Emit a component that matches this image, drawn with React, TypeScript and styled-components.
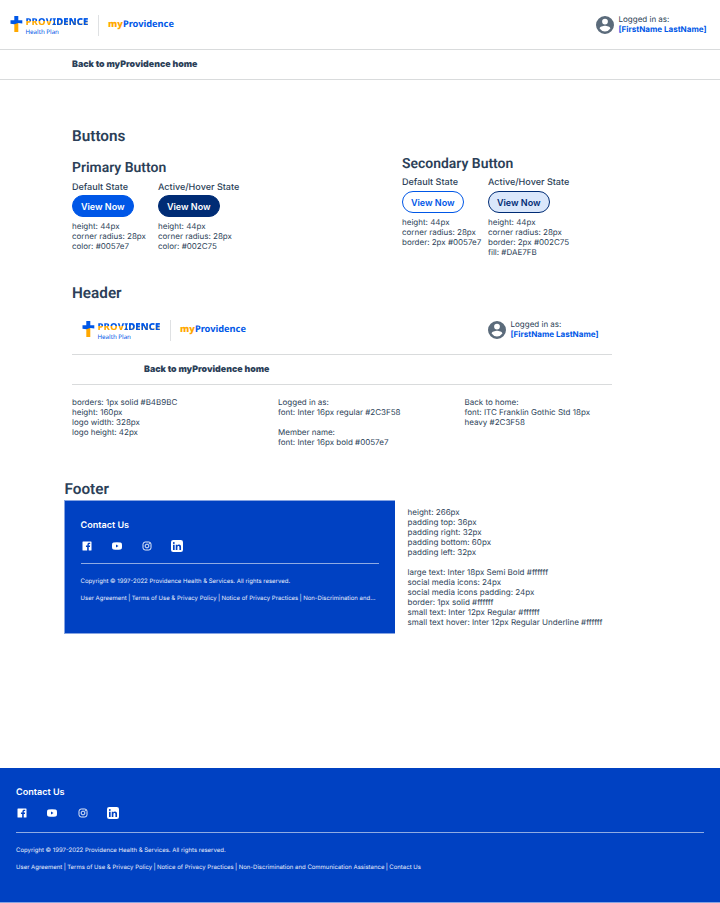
import React from "react";
import styled, { createGlobalStyle } from "styled-components";

const Global = createGlobalStyle`
  * { box-sizing: border-box; }
  body { margin: 0; background: #fff; text-rendering: geometricPrecision; }
`;

const Page = styled.div`
  width: 720px;
  height: 903px;
  overflow: hidden;
  display: flex;
  flex-direction: column;
  background: #fff;
  color: #2c3f58;
  font: 400 8px/10px Inter, sans-serif;
  white-space: nowrap;
`;

/* Header */
const HeaderBox = styled.header<{ $w: number }>`
  width: ${(p) => p.$w}px;
  height: 80px;
  flex: none;
`;
const Bar = styled.div`
  height: 50px;
  border-bottom: 1px solid #d9dbdc;
  display: flex;
  align-items: flex-start;
  justify-content: space-between;
`;
const Brand = styled.div`
  display: flex;
  padding: 15px 0 0 10px;
`;
const Cross = styled.svg`
  width: 13px;
  height: 17px;
  margin-top: 1px;
`;
const Names = styled.div`
  width: 66px;
  margin-left: 2.5px;
  padding-top: 1px;
`;
const Providence = styled.div`
  width: 64px;
  font: 800 9.5px/12px "Noto Sans", sans-serif;
  letter-spacing: 0.15px;
  color: transparent;
  background: linear-gradient(122deg, transparent 44%, #0057e7 44.5%),
    linear-gradient(#0057e7 0 42%, #ffa800 42%);
  background-clip: text;
  -webkit-background-clip: text;
`;
const Plan = styled.div`
  font: 400 6.2px/7px "Noto Sans", sans-serif;
  color: #0057e7;
`;
const Rule = styled.div`
  width: 1px;
  height: 21px;
  background: #dfe1e3;
  margin-left: 6.5px;
`;
const Product = styled.div`
  margin: 3px 0 0 9px;
  font: 700 9.25px/12px "Noto Sans", sans-serif;
  color: #0057e7;
  b { color: #ffa800; }
`;
const User = styled.div`
  width: 124px;
  display: flex;
  padding-top: 15px;
  svg { width: 18px; height: 18px; margin-top: 1px; flex: none; }
`;
const UserText = styled.div`
  margin-left: 4.5px;
  line-height: 9.5px;
  b { display: block; font-weight: 700; font-size: 8.04px; color: #0057e7; }
`;
const Back = styled.div`
  height: 30px;
  border-bottom: 1px solid #d9dbdc;
  padding-left: 72px;
  font: 900 8.85px/30px Inter, sans-serif;
`;

function Header({ width }: { width: number }) {
  return (
    <HeaderBox $w={width}>
      <Bar>
        <Brand>
          <Cross viewBox="0 0 13 17">
            <path d="M4.3 7h4v9h-4z" fill="#ffa800" />
            <path d="M4.3 0h4v4.2h4v3.2l-4-.4-4 1.2-3.8-.5V4.2h3.8z" fill="#0057e7" />
          </Cross>
          <Names>
            <Providence>PROVIDENCE</Providence>
            <Plan>Health Plan</Plan>
          </Names>
          <Rule />
          <Product><b>my</b>Providence</Product>
        </Brand>
        <User>
          <svg viewBox="2 2 20 20" fill="#5b6b7b">
            <path d="M12 2a10 10 0 1 0 0 20 10 10 0 0 0 0-20zm0 3a3.2 3.2 0 1 1 0 6.4A3.2 3.2 0 0 1 12 5zm0 14.2a7.2 7.2 0 0 1-6-3.2c0-2 4-3.1 6-3.1s6 1.100 6 3.100a7.200 7.200 0 0 1-6 3.200z" />
          </svg>
          <UserText>Logged in as:<b>[FirstName LastName]</b></UserText>
        </User>
      </Bar>
      <Back>Back to myProvidence home</Back>
    </HeaderBox>
  );
}

/* Sections */
const Heading = styled.h1`
  margin: 0;
  font: 600 15.3px/20px Roboto, sans-serif;
`;
const SubHeading = styled.h2`
  margin: 0 0 3.5px;
  font: 600 13.95px/20px Roboto, sans-serif;
`;
const ButtonsSection = styled.section`
  margin: 46px 0 0 72px;
  height: 157px;
  display: flex;
`;
const Group = styled.div<{ $w: number; $top: number }>`
  width: ${(p) => p.$w}px;
  padding-top: ${(p) => p.$top}px;
  ${Heading} { margin-bottom: 12px; }
`;
const States = styled.div`
  display: flex;
`;
const State = styled.div`
  width: 86px;
`;
const StateName = styled.div`
  font: 500 9.05px/12px Inter, sans-serif;
`;
const Pill = styled.button<{ $bg: string; $fg: string; $line: string }>`
  display: block;
  width: 61.5px;
  height: 22px;
  margin: 1.5px 0 4px;
  padding: 0;
  border: 1px solid ${(p) => p.$line};
  border-radius: 14px;
  background: ${(p) => p.$bg};
  color: ${(p) => p.$fg};
  font: 600 9px/21px Inter, sans-serif;
`;
const Note = styled.div<{ $w?: number }>`
  width: ${(p) => (p.$w ? p.$w + "px" : "auto")};
  white-space: pre;
`;
const HeaderSection = styled.section`
  margin-left: 72px;
  height: 195px;
  ${Heading} { margin-bottom: 2px; }
`;
const Notes = styled.div`
  display: flex;
  padding-top: 12px;
`;
const FooterSection = styled.section`
  margin-left: 64px;
  height: 290px;
  ${Heading} { line-height: 22px; padding-left: 0.5px; }
`;
const FooterRow = styled.div`
  display: flex;
  gap: 12.5px;
  ${Note} { padding-top: 7px; font-size: 8.04px; }
`;

/* Footer */
const FooterBox = styled.footer<{ $w: number; $h: number; $boxed?: boolean }>`
  width: ${(p) => p.$w}px;
  height: ${(p) => p.$h}px;
  flex: none;
  padding: ${(p) => (p.$boxed ? "18.5px 16px 0 15.5px" : "18.5px 16px 0")};
  background: #0041c2;
  border: 0 solid #86a4e2;
  border-width: ${(p) => (p.$boxed ? "1px 0 1px 1px" : "0 0 1px")};
  color: #fff;
`;
const Contact = styled.div`
  font: 600 9.05px/12px Inter, sans-serif;
`;
const Social = styled.div`
  display: flex;
  gap: 18.3px;
  margin-top: 8.5px;
  svg { width: 12px; height: 12px; display: block; }
`;
const Divider = styled.div<{ $top: number; $bottom: number }>`
  height: 1px;
  background: #8fabe3;
  margin: ${(p) => p.$top}px 0 ${(p) => p.$bottom}px;
`;
const Small = styled.div`
  font: 400 6px/8px Inter, sans-serif;
  margin-bottom: 9px;
  color: #e8eefa;
`;
const Links = styled(Small)`
  display: flex;
  span + span::before {
    content: "|";
    margin: 0 1.35px;
    font-size: 6.5px;
    line-height: 1px;
  }
`;

interface FooterProps {
  width: number;
  height: number;
  top: number;
  bottom: number;
  boxed?: boolean;
  links: string[];
}

function Footer(p: FooterProps) {
  return (
    <FooterBox $w={p.width} $h={p.height} $boxed={p.boxed}>
      <Contact>Contact Us</Contact>
      <Social>
        <svg viewBox="0 0 24 24">
          <path fill="#fff" d="M4 3h16a1 1 0 0 1 1 1v16a1 1 0 0 1-1 1h-4.500v-7h2.400l.4-2.800h-2.800V9.500c0-.9.400-1.400 1.400-1.400h1.500V5.600c-.4 0-1.200-.1-2-.1-2.200 0-3.600 1.300-3.600 3.700v2H9.900V14h2.400v7H4a1 1 0 0 1-1-1V4a1 1 0 0 1 1-1z" />
        </svg>
        <svg viewBox="0 0 24 24">
          <path fill="#fff" fillRule="evenodd" d="M5 5q7-.8 14 0 2.600.2 2.800 2.800.5 4.200 0 8.400-.2 2.600-2.800 2.800-7 .8-14 0-2.600-.2-2.800-2.800-.5-4.200 0-8.400Q2.400 5.200 5 5zm5 4v6l5-3z" />
        </svg>
        <svg viewBox="0 0 24 24" fill="none" stroke="#fff" strokeWidth="1.8">
          <rect x="4" y="4" width="16" height="16" rx="4.500" />
          <circle cx="12" cy="12" r="3.800" />
          <circle cx="16.600" cy="7.400" r=".5" />
        </svg>
        <svg viewBox="0 0 24 24">
          <rect width="24" height="24" rx="4.500" fill="#fff" />
          <path fill="#0041c2" d="M4 9.300h3.300V20H4zM5.650 4a1.900 1.900 0 1 1 0 3.800 1.900 1.900 0 0 1 0-3.800zM9.500 9.300h3.200v1.500c.6-1 1.700-1.800 3.300-1.800 3.200 0 4.100 2 4.100 5V20h-3.300v-5.300c0-1.500-.3-2.800-1.900-2.800s-2.100 1.200-2.100 2.700V20H9.500z" />
        </svg>
      </Social>
      <Divider $top={p.top} $bottom={p.bottom} />
      <Small>Copyright © 1997-2022 Providence Health &amp; Services. All rights reserved.</Small>
      <Links>{p.links.map((l) => <span key={l}>{l}</span>)}</Links>
    </FooterBox>
  );
}

const common = ["User Agreement", "Terms of Use & Privacy Policy", "Notice of Privacy Practices"];

export default function App() {
  return (
    <Page>
      <Global />
      <Header width={720} />
      <ButtonsSection>
        <Group $w={330} $top={0}>
          <Heading>Buttons</Heading>
          <SubHeading>Primary Button</SubHeading>
          <States>
            <State>
              <StateName>Default State</StateName>
              <Pill $bg="#0057e7" $fg="#fff" $line="#0057e7">View Now</Pill>
              <Note>{"height: 44px\ncorner radius: 28px\ncolor: #0057e7"}</Note>
            </State>
            <State>
              <StateName>Active/Hover State</StateName>
              <Pill $bg="#002c75" $fg="#fff" $line="#002c75">View Now</Pill>
              <Note>{"height: 44px\ncorner radius: 28px\ncolor: #002C75"}</Note>
            </State>
          </States>
        </Group>
        <Group $w={250} $top={27.5}>
          <SubHeading>Secondary Button</SubHeading>
          <States>
            <State>
              <StateName>Default State</StateName>
              <Pill $bg="#fff" $fg="#0057e7" $line="#0057e7">View Now</Pill>
              <Note>{"height: 44px\ncorner radius: 28px\nborder: 2px #0057e7"}</Note>
            </State>
            <State>
              <StateName>Active/Hover State</StateName>
              <Pill $bg="#dae7fb" $fg="#002c75" $line="#002c75">View Now</Pill>
              <Note>{"height: 44px\ncorner radius: 28px\nborder: 2px #002C75\nfill: #DAE7FB"}</Note>
            </State>
          </States>
        </Group>
      </ButtonsSection>
      <HeaderSection>
        <Heading>Header</Heading>
        <Header width={540} />
        <Notes>
          <Note $w={206}>{"borders: 1px solid #B4B9BC\nheight: 160px\nlogo width: 328px\nlogo height: 42px"}</Note>
          <Note $w={186.5}>{"Logged in as:\nfont: Inter 16px regular #2C3F58\n\nMember name:\nfont: Inter 16px bold #0057e7"}</Note>
          <Note>{"Back to home:\nfont: ITC Franklin Gothic Std 18px\nheavy #2C3F58"}</Note>
        </Notes>
      </HeaderSection>
      <FooterSection>
        <Heading>Footer</Heading>
        <FooterRow>
          <Footer boxed width={331} height={134} top={11} bottom={13.5} links={[...common, "Non-Discrimination and..."]} />
          <Note>{"height: 266px\npadding top: 36px\npadding right: 32px\npadding bottom: 60px\npadding left: 32px\n\nlarge text: Inter 18px Semi Bold #ffffff\nsocial media icons: 24px\nsocial media icons padding: 24px\nborder: 1px solid #ffffff\nsmall text: Inter 12px Regular #ffffff\nsmall text hover: Inter 12px Regular Underline #ffffff"}</Note>
        </FooterRow>
      </FooterSection>
      <Footer width={720} height={135} top={13} bottom={13.5} links={[...common, "Non-Discrimination and Communication Assistance", "Contact Us"]} />
    </Page>
  );
}
